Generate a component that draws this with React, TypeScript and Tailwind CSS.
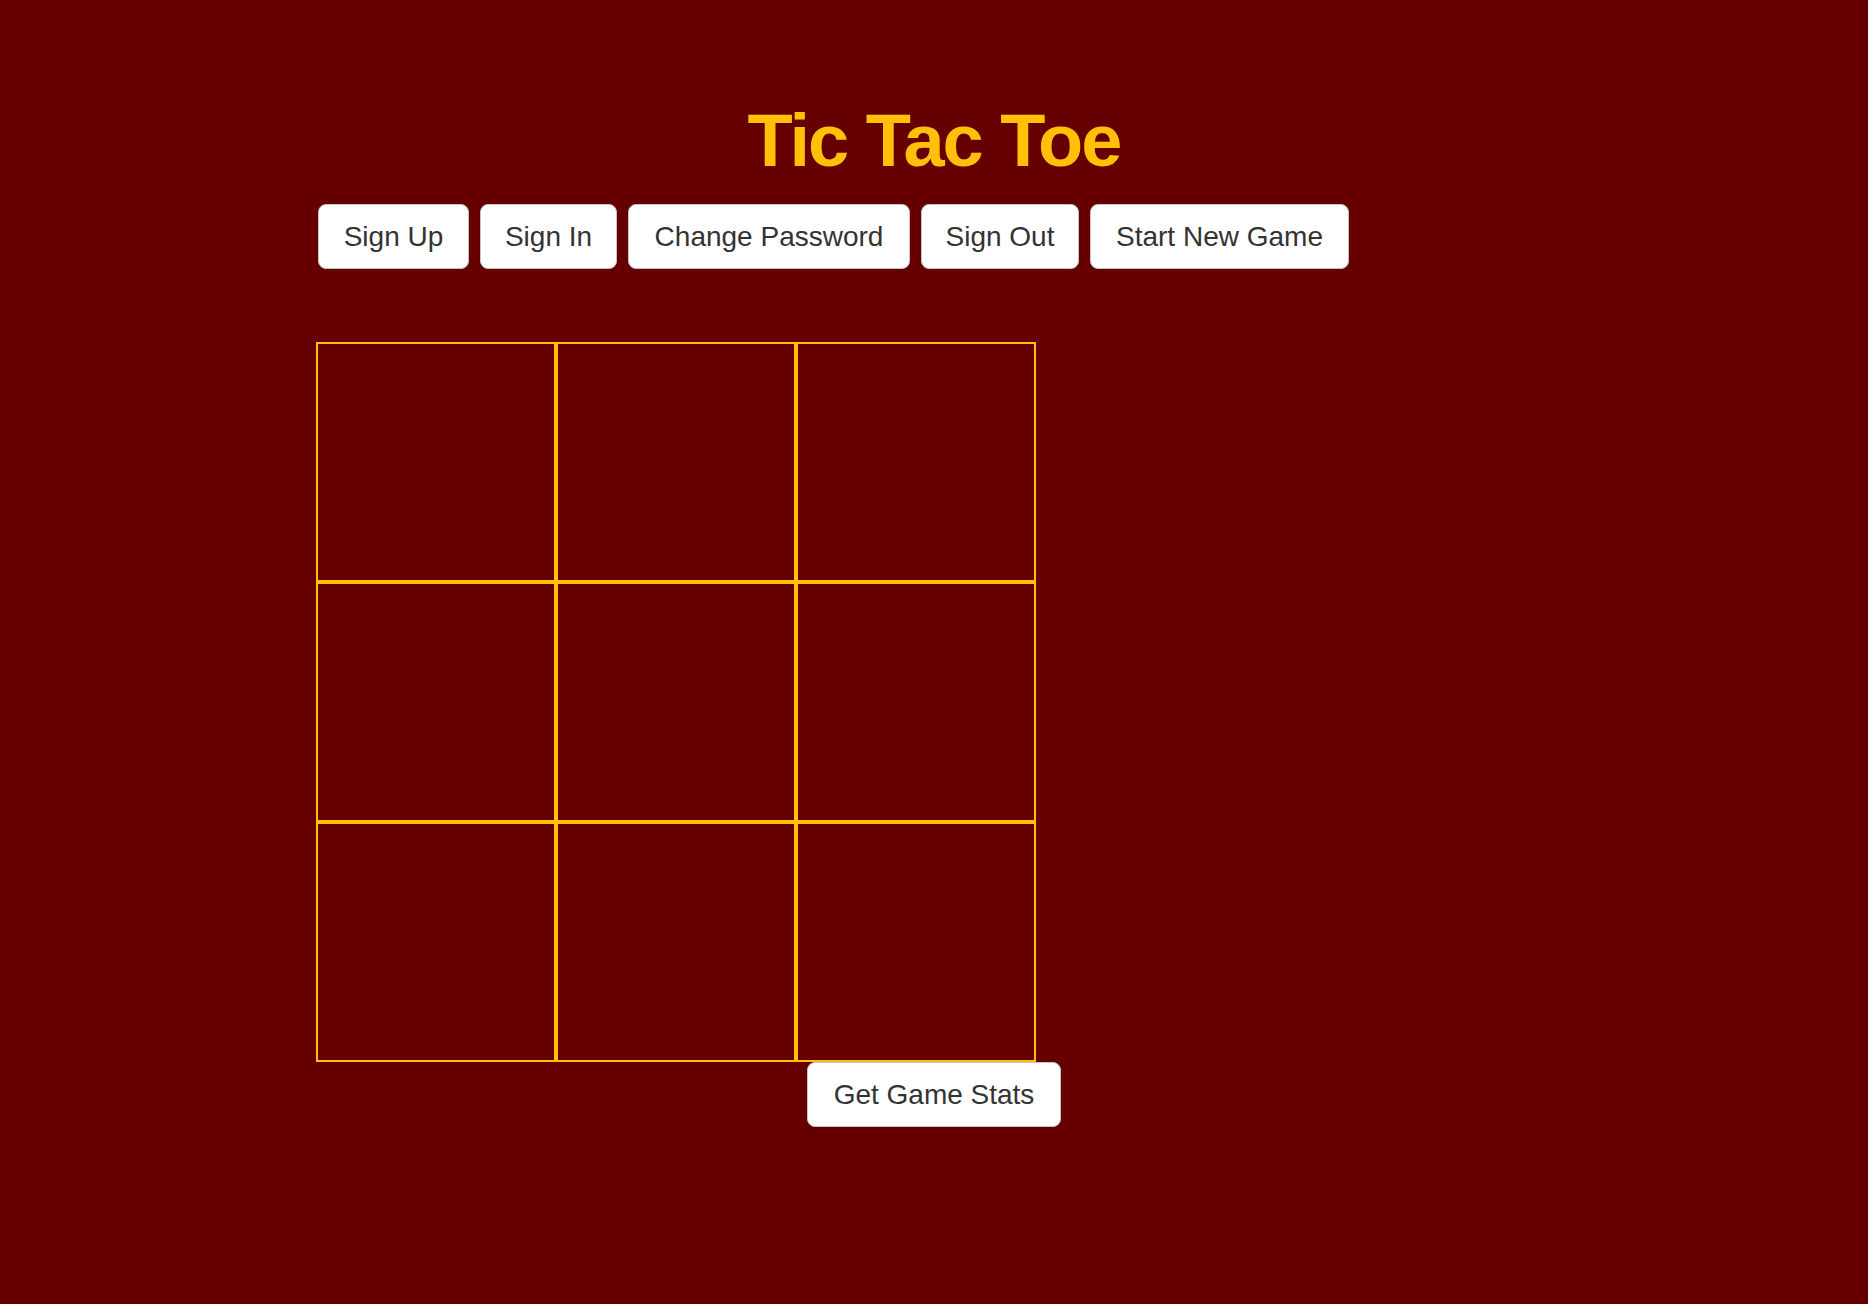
const buttons = [
  { label: "Sign Up", width: "w-[151px]" },
  { label: "Sign In", width: "w-[137px]" },
  { label: "Change Password", width: "w-[282px]" },
  { label: "Sign Out", width: "w-[158px]" },
  { label: "Start New Game", width: "w-[259px]" },
];

const cells = Array.from({ length: 9 }, (_, i) => i);

function Button({ label, className }: { label: string; className: string }) {
  return (
    <button
      type="button"
      className={`flex h-[65px] items-center justify-center rounded-[8px] border border-[#c4c4c4] bg-white text-[28px] text-[#333333] ${className}`}
    >
      {label}
    </button>
  );
}

export default function App() {
  return (
    <div
      className="min-h-screen w-full bg-[#660000] pt-[100px]"
      style={{ fontFamily: '"Liberation Sans", Arial, sans-serif' }}
    >
      {/* Header */}
      <h1 className="text-center text-[74px] font-bold leading-[81px] tracking-[-2px] text-[#ffc107]">
        Tic Tac Toe
      </h1>

      {/* Auth + game controls */}
      <div className="mt-[23px] flex gap-[11px] pl-[318px]">
        {buttons.map((b) => (
          <Button key={b.label} label={b.label} className={b.width} />
        ))}
      </div>

      {/* Board */}
      <div className="mt-[73px] grid w-[720px] grid-cols-3 ml-[316px]">
        {cells.map((i) => (
          <div key={i} className="h-[240px] w-[240px] border-2 border-[#ffc107]" />
        ))}
      </div>

      <div className="flex justify-center">
        <Button label="Get Game Stats" className="w-[254px]" />
      </div>
    </div>
  );
}
